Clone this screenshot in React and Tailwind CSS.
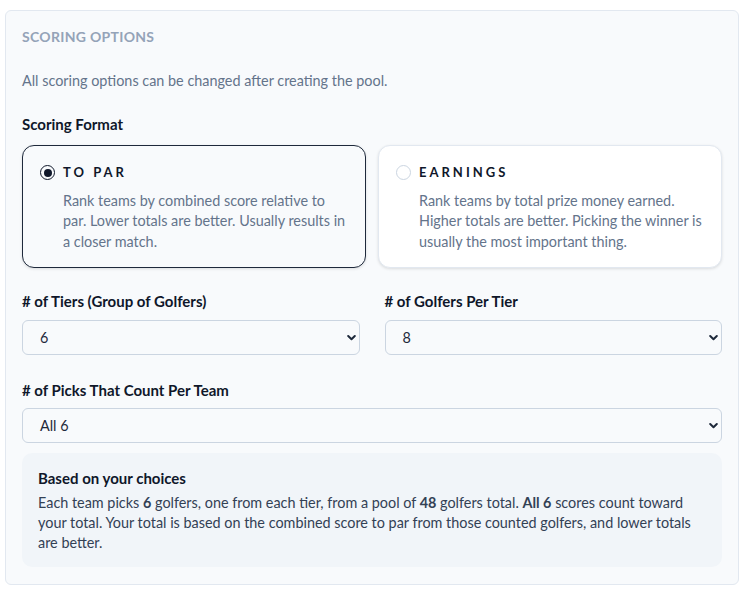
import React from "react";

function Chevron() {
  return (
    <svg className="pointer-events-none absolute right-[4px] top-1/2 -translate-y-1/2" width="9" height="7" viewBox="0 0 9 7" fill="none">
      <path d="M1.2 1.5l3.3 3.3 3.3-3.3" stroke="#1e293b" strokeWidth="2" strokeLinecap="round" strokeLinejoin="round" />
    </svg>
  );
}

function Select({ value }) {
  return (
    <div className="relative">
      <div className="h-[35px] rounded-[6px] border border-[#cbd5e1] bg-[#f8fafc] pl-[17px] flex items-center text-[14.4px] text-[#1e293b]">
        {value}
      </div>
      <Chevron />
    </div>
  );
}

export default function App() {
  return (
    <div className="w-[748px] h-[599px] bg-white pt-[10px] pl-[5px] pr-[10px]" style={{ fontFamily: "Lato, 'Noto Sans', sans-serif" }}>
      <div className="w-[734px] h-[575px] rounded-[6px] border border-[#e2e8f0] bg-[#f8fafc] px-[16px] pt-[17px]">
        <div className="text-[14px] font-bold tracking-[0.3px] text-[#94a3b8] leading-[18px]">SCORING OPTIONS</div>
        <div className="mt-[26px] text-[14.4px] text-[#64748b] leading-[18px]">All scoring options can be changed after creating the pool.</div>
        <div className="mt-[25px] text-[15px] font-bold text-[#0f172a] leading-[18px]">Scoring Format</div>
        <div className="mt-[12px] flex gap-[12px]">
          <div className="w-[344px] h-[123px] rounded-[12px] border-[1.5px] border-[#1e293b] bg-[#f8fafc] shadow-[0_1px_3px_rgba(0,0,0,0.12)] pl-[17px] pt-[17px] pr-[15px]">
            <div className="flex items-center gap-[8px]">
              <div className="w-[15px] h-[15px] rounded-full border-[1.5px] border-[#0f172a] flex items-center justify-center">
                <div className="w-[8px] h-[8px] rounded-full bg-[#0f172a]" />
              </div>
              <div className="text-[13px] font-bold tracking-[3px] text-[#0f172a]">TO PAR</div>
            </div>
            <div className="mt-[8px] pl-[23px] text-[14.4px] leading-[20.5px] text-[#64748b]">
              Rank teams by combined score relative to par. Lower totals are better. Usually results in a closer match.
            </div>
          </div>
          <div className="w-[344px] h-[123px] rounded-[12px] border border-[#e2e8f0] bg-white shadow-[0_1px_3px_rgba(0,0,0,0.12)] pl-[17px] pt-[17px] pr-[12px]">
            <div className="flex items-center gap-[8px]">
              <div className="w-[15px] h-[15px] rounded-full border border-[#cbd5e1] bg-white" />
              <div className="text-[13px] font-bold tracking-[3px] text-[#0f172a]">EARNINGS</div>
            </div>
            <div className="mt-[8px] pl-[23px] text-[14.4px] leading-[20.5px] text-[#64748b]">
              Rank teams by total prize money earned. Higher totals are better. Picking the winner is usually the most important thing.
            </div>
          </div>
        </div>
        <div className="mt-[24px] grid grid-cols-2 gap-[25px]">
          <div>
            <div className="text-[15px] font-bold text-[#0f172a] leading-[18px]">
              # of Tiers (Group of Golfers)
            </div>
            <div className="mt-[10px]"><Select value="6" /></div>
          </div>
          <div>
            <div className="text-[15px] font-bold text-[#0f172a] leading-[18px]">
              # of Golfers Per Tier
            </div>
            <div className="mt-[10px]"><Select value="8" /></div>
          </div>
        </div>
        <div className="mt-[26px] text-[15px] font-bold text-[#0f172a] leading-[18px]"># of Picks That Count Per Team</div>
        <div className="mt-[9px]"><Select value="All 6" /></div>
        <div className="mt-[10px] rounded-[10px] bg-[#f1f5f9] px-[16px] pt-[16px] pb-[16px] h-[114px]">
          <div className="text-[15px] font-bold text-[#0f172a] leading-[18px]">Based on your choices</div>
          <div className="mt-[6px] text-[14.4px] leading-[20px] text-[#334155]">
            Each team picks <b>6</b> golfers, one from each tier, from a pool of <b>48</b> golfers total. <b>All 6</b> scores count toward your total. Your total is based on the combined score to par from those counted golfers, and lower totals are better.
          </div>
        </div>
      </div>
    </div>
  );
}
